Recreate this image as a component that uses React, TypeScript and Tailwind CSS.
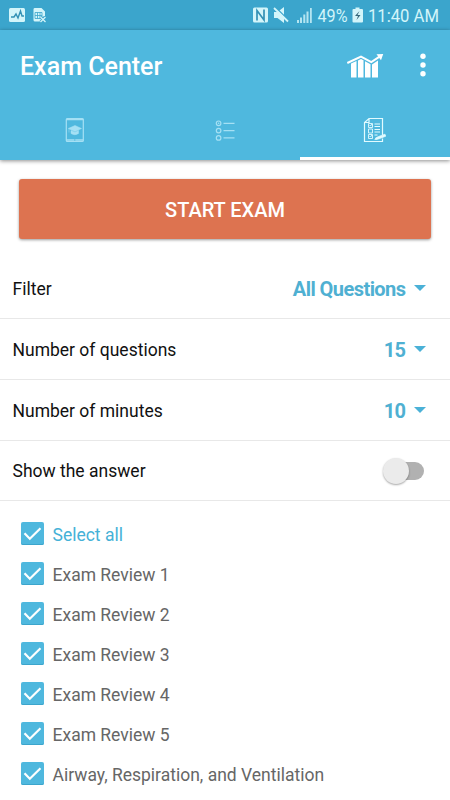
import React from 'react';

const settings = [
  { label: 'Filter', value: 'All Questions' },
  { label: 'Number of questions', value: '15' },
  { label: 'Number of minutes', value: '10' },
];

const topics = [
  'Select all',
  'Exam Review 1',
  'Exam Review 2',
  'Exam Review 3',
  'Exam Review 4',
  'Exam Review 5',
  'Airway, Respiration, and Ventilation',
];

function StatusBar() {
  return (
    <div className="flex h-[30px] shrink-0 items-center justify-between bg-[#3ba5cc] text-[#d3f5fa]">
      <svg width="60" height="30" viewBox="0 0 60 30" fill="none">
        <rect x="9" y="8" width="16" height="14" rx="1.5" fill="currentColor" />
        <path d="M11 17h3l2-3 2 4 2.5-7 1.5 5h2" stroke="#3391b5" strokeWidth="1.4" />
        <path d="M34.5 8h7l3.500 3.500v5h-2v5h-8a1.500 1.500 0 0 1-1.500-1.500V9.500A1.500 1.500 0 0 1 34.500 8Z" fill="currentColor" />
        <path d="M35 12.500h7v6h-7zM35 15.500h7M37.500 12.500v6M40 12.500v6" stroke="#3ba5cc" strokeWidth=".8" />
        <path d="m40.500 17 5 5m0-5-5 5" stroke="#3ba5cc" strokeWidth="3" />
        <path d="m40.500 17 5 5m0-5-5 5" stroke="currentColor" strokeWidth="1.300" />
      </svg>
      <svg width="210" height="30" viewBox="240 0 210 30" fill="currentColor">
        <rect x="253" y="7.500" width="15" height="15" rx="1.500" />
        <path d="M257 20.500V10.500l7 9.500V9.500" fill="none" stroke="#3391b5" strokeWidth="1.700" />
        <path d="M274 12h3.500l6.500-5v16l-6.500-5H274z" />
        <path d="m275 6.800 14 14" stroke="#3ba5cc" strokeWidth="1.500" />
        <path d="m274 8 14 13.500" stroke="currentColor" strokeWidth="1.800" />
        <path d="M297 20h2v3h-2zM300 17.500h2V23h-2zM303.300 14.500h2V23h-2zM306.500 11.500h2V23h-2zM310 8h1.800v15H310z" opacity=".8" />
        <text x="317.500" y="22.300" fontFamily="Roboto, sans-serif" fontSize="18.800" textLength="30" lengthAdjust="spacingAndGlyphs">49%</text>
        <path d="M355.500 7.500h4V9h2.500q1 0 1 1v11.500q0 1-1 1h-8.500q-1 0-1-1V10q0-1 1-1h2z" />
        <path d="m359.500 11-4.500 5h3l-1.500 4 4-5h-3z" fill="#35677a" />
        <text x="368" y="22.300" fontFamily="Roboto, sans-serif" fontSize="18.800" textLength="71" lengthAdjust="spacingAndGlyphs">11:40 AM</text>
      </svg>
    </div>
  );
}

function ChartIcon() {
  return (
    <svg className="block" width="38" height="26" viewBox="346 52 38 26" fill="white">
      <path d="M351 62.500l5.500-2.500v16.500H351zM358 59.500l3-1.500 2.500 1.300v17.200H358zM365 60.300l5.500 3v13.200H365zM372 63.500l6-4v17h-6z" />
      <path d="m347.300 62 13.700-6.300 10.300 5.500 9-6" fill="none" stroke="white" strokeWidth="2" />
      <path d="m376.500 53.300 6.700-.3-2.200 6.300z" />
    </svg>
  );
}

function TabletIcon() {
  return (
    <svg width="20" height="26" viewBox="65 117 20 26" fill="none" stroke="currentColor" strokeWidth="1.200">
      <rect x="66.300" y="118.500" width="17" height="23" rx="1" />
      <path d="M66 119.500h17.500M66 140h17.500" strokeWidth="1.700" />
      <path d="m68.200 128.500 6.800-3 6.500 3-6.500 3zM71 130.500v3q4 2.500 7.500 0v-3l-3.500 1.700zM69 129v3.500" fill="currentColor" strokeWidth=".5" />
      <circle cx="74.800" cy="140" r=".7" fill="#4fb8de" stroke="none" />
    </svg>
  );
}

function ListIcon() {
  return (
    <svg width="20" height="22" viewBox="215 120 20 22" fill="none" stroke="currentColor" strokeWidth="1.200">
      <circle cx="218.600" cy="123.300" r="2.300" />
      <circle cx="218.600" cy="130.600" r="2.300" />
      <circle cx="218.600" cy="137.900" r="2.300" />
      <circle cx="218.600" cy="123.300" r=".8" fill="currentColor" stroke="none" />
      <path d="M223.500 123.300H234.500M223.500 130.600H234.500M223.500 137.900H234.500" />
    </svg>
  );
}

function ExamIcon() {
  return (
    <svg width="23" height="26" viewBox="363 117 23 26" fill="none" stroke="currentColor" strokeWidth="1.200">
      <path d="M382.500 135v-16.500h-13.500l-4.500 4v19h18v-3M369 118.500v4h-4.500" />
      <path d="M368.500 123.500h4v4h-4zM368.500 129h4v4h-4zM368.500 134.500h4v4h-4zM369.500 125l1 1 1.500-2M369.500 136l1 1 1.500-2" strokeWidth=".9" />
      <path d="M374.500 124h5.500M374.500 126.500h5.500M374.500 129.500h5.500M374.500 132h5.500M374.500 135h3" strokeWidth="1" />
      <path d="m375.500 138 3-1.500 6.500-2.300.8 2-7.300 2.800-3 .2zM374.500 139.500h3" fill="currentColor" strokeWidth=".7" />
    </svg>
  );
}

function Check() {
  return (
    <span className="flex size-[23px] shrink-0 items-center justify-center rounded-[2px] bg-[#4fb8de] shadow-[inset_0_-1px_0_#3ca5cc]">
      <svg width="23" height="23" viewBox="0 0 23 23" fill="none" stroke="white" strokeWidth="2.200">
        <path d="m3.500 11.300 5.300 5.400L19.500 6.200" />
      </svg>
    </span>
  );
}

export default function App() {
  return (
    <div className="flex h-[800px] w-[450px] flex-col overflow-hidden bg-white font-['Roboto',sans-serif]">
      <StatusBar />
      <header className="h-[130px] shrink-0 bg-[#4fb8de] shadow-[0_1px_4px_rgba(0,0,0,0.45)]">
        <div className="flex h-[70px] items-center pl-[20px] pr-[22px] pt-[2px]">
          <h1 className="flex-1 pt-[1px] text-[25px] font-medium leading-8 text-white">Exam Center</h1>
          <div className="mr-[34px]"><ChartIcon /></div>
          <svg width="10" height="26" viewBox="0 0 10 26" fill="white">
            <circle cx="5" cy="3.300" r="2.700" />
            <circle cx="5" cy="12" r="2.700" />
            <circle cx="5" cy="20.700" r="2.700" />
          </svg>
        </div>
        <nav className="grid h-[60px] grid-cols-3 text-[#a5e0f4]">
          <div className="flex items-center justify-center"><TabletIcon /></div>
          <div className="flex items-center justify-center pt-[2px]"><ListIcon /></div>
          <div className="flex items-center justify-center border-b-[3px] border-white pr-[1px] pt-[3px] text-[#e2fbff]"><ExamIcon /></div>
        </nav>
      </header>
      <main className="flex flex-col">
        <button className="mx-[19px] mt-[19px] h-[60px] rounded-[3px] bg-[#dd7350] pt-[1px] text-[20px] font-medium text-white shadow-[0_1px_3px_rgba(0,0,0,0.4)]">
          START EXAM
        </button>
        <section className="mt-[19px] text-[17.5px] text-[#111111]">
          {settings.map((row) => (
            <div key={row.label} className="flex h-[61px] items-center justify-between border-b border-[#e8e8e8] pl-[12.5px] pr-[24px]">
              <span className="pt-[2px]">{row.label}</span>
              <span className="flex items-center gap-[9px] text-[20px] font-bold text-[#4fb0d2]">
                <span className="-mr-[0.5px] pt-[1px] tracking-[-0.55px]">{row.value}</span>
                <svg width="12" height="6" viewBox="0 0 12 6" fill="#4bb1d7"><path d="M0 0h12L6 6z" /></svg>
              </span>
            </div>
          ))}
          <div className="flex h-[60px] items-center justify-between border-b border-[#e8e8e8] pl-[12.5px] pr-[26px]">
            <span className="pt-[2px]">Show the answer</span>
            <span className="flex h-[18px] w-[38px] items-center rounded-full bg-[#b1b1b1]">
              <span className="-ml-[3px] size-[26px] rounded-full bg-[#ebebeb] shadow-[0_1px_2px_rgba(0,0,0,0.35)]" />
            </span>
          </div>
        </section>
        <ul className="pl-[21px] pt-[12.5px]">
          {topics.map((topic, index) => (
            <li key={topic} className={`flex h-[40px] items-center gap-[8.5px] text-[17.5px] ${index === 0 ? 'text-[#45b1d7]' : 'text-[#666666]'}`}>
              <Check />
              <span className="pt-[3px]">{topic}</span>
            </li>
          ))}
        </ul>
      </main>
    </div>
  );
}
